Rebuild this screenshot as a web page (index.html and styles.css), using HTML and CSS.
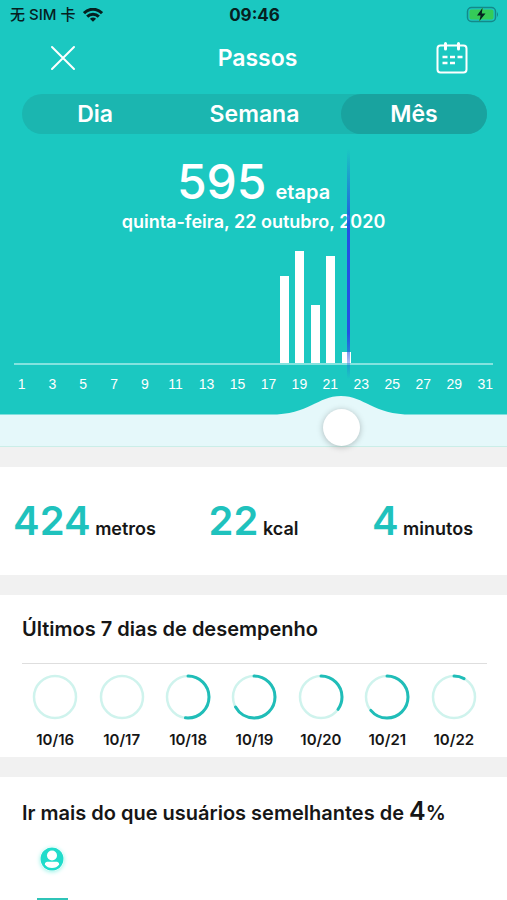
FILE: index.html
```html
<!DOCTYPE html>
<html lang="pt-br">
<head>
  <meta charset="UTF-8">
  <meta name="viewport" content="width=device-width, initial-scale=1">
  <title>Passos</title>
  <link rel="stylesheet" href="styles.css">
</head>
<body>
  <div class="topo">
    <!-- Barra de status -->
    <div class="status">
      <div class="operadora">
        <span>无 SIM 卡</span>
        <svg width="20" height="14" viewBox="0 0 20 14" fill="none" stroke="#06201f" stroke-width="3">
          <path d="M1 5.2C6-.1 14-.1 19 5.2"/>
          <path d="M4.2 8.6C7.4 5.4 12.6 5.4 15.8 8.6"/>
          <path d="M10 13.8L6.9 10.8Q10 8.3 13.1 10.8Z" fill="#06201f" stroke="none"/>
        </svg>
      </div>
      <div class="hora">09:46</div>
      <div class="bateria">
        <svg width="34" height="18" viewBox="0 0 34 18">
          <rect x="2.5" y="1.5" width="28" height="14" rx="4" fill="none" stroke="#14898a" stroke-width="1.5"/>
          <rect x="4.5" y="3.5" width="24" height="10" rx="2" fill="#35cb58"/>
          <path d="M32 6Q34 8.5 32 11Z" fill="#14898a"/>
          <path d="M17.5 2L12 9.5H15.6L14.4 15L20.5 7.4H16.8Z" fill="#052420" stroke="#35cb58" stroke-width="1" paint-order="stroke"/>
        </svg>
      </div>
    </div>

    <header class="cabecalho">
      <button class="icone" type="button" aria-label="Fechar">
        <svg width="26" height="26" viewBox="0 0 26 26" stroke="#fff" stroke-width="2" stroke-linecap="round">
          <path d="M2 2L24 24M24 2L2 24"/>
        </svg>
      </button>
      <h1>Passos</h1>
      <button class="icone" type="button" aria-label="Calendário">
        <svg width="34" height="34" viewBox="0 0 34 34" fill="none" stroke="#fff" stroke-width="2.5">
          <rect x="2.5" y="4.5" width="29" height="27" rx="3" stroke-width="2"/>
          <path d="M10.5 2.5V8M23.5 2.5V8" stroke-width="3" stroke-linecap="round"/>
          <path d="M7.5 16H12.5M15 16H20M22.5 16H27.5M7.5 22H12.5M15 22H20"/>
        </svg>
      </button>
    </header>

    <nav class="abas">
      <button type="button">Dia</button>
      <button type="button">Semana</button>
      <button type="button" class="ativa">Mês</button>
    </nav>

    <div class="resumo">
      <p class="total"><strong>595</strong> etapa</p>
      <p class="data">quinta-feira, 22 outubro, 2020</p>
    </div>

    <!-- Gráfico do mês: uma coluna por dia -->
    <div class="grafico">
      <div class="barras" id="barras"></div>
      <div class="dias" id="dias"></div>
    </div>

    <div class="seletor">
      <svg class="onda" viewBox="0 0 507 52" preserveAspectRatio="none">
        <path d="M0 20H270C310 20 317 1 341 1C365 1 372 20 412 20H507V52H0Z" fill="#e5f8fa"/>
      </svg>
      <input type="range" min="1" max="31" value="22" aria-label="Dia do mês">
    </div>
  </div>

  <section class="numeros">
    <p><strong>424</strong> metros</p>
    <p><strong>22</strong> kcal</p>
    <p><strong>4</strong> minutos</p>
  </section>

  <section class="desempenho">
    <h2>Últimos 7 dias de desempenho</h2>
    <ul class="aneis" id="aneis"></ul>
  </section>

  <section class="comparacao">
    <h2>Ir mais do que usuários semelhantes de <strong>4</strong>%</h2>
    <div class="usuario">
      <svg width="24" height="24" viewBox="0 0 24 24">
        <circle cx="12" cy="12" r="11.5" fill="#20dccb"/>
        <circle cx="12" cy="8.5" r="5" fill="#fff"/>
        <path d="M4.8 17.5C5 13.8 8.5 14.8 12 14.8S19 13.8 19.2 17.5C17.5 20 15 21 12 21S6.500 20 4.8 17.5Z" fill="#fff"/>
      </svg>
      <div class="coluna"></div>
    </div>
  </section>

  <script>
    // Altura das barras em px, por dia do mês
    const passos = { 18: 87, 19: 112, 20: 58, 21: 107, 22: 11 };
    const barras = document.getElementById("barras");
    const dias = document.getElementById("dias");

    for (let dia = 1; dia <= 31; dia++) {
      const coluna = document.createElement("div");
      if (passos[dia]) {
        coluna.innerHTML = `<div class="barra" style="height: ${passos[dia]}px"></div>`;
      }
      if (dia === 22) {
        coluna.innerHTML += `<div class="marcador"></div>`;
      }
      barras.appendChild(coluna);

      const rotulo = document.createElement("span");
      rotulo.textContent = dia % 2 ? dia : "";
      dias.appendChild(rotulo);
    }

    // Percentual da meta em cada dia
    const ultimos = [
      ["10/16", 0], ["10/17", 0], ["10/18", 52], ["10/19", 67],
      ["10/20", 35], ["10/21", 64], ["10/22", 8]
    ];

    document.getElementById("aneis").innerHTML = ultimos.map(([data, valor]) => `
      <li>
        <svg width="46" height="46" viewBox="0 0 46 46" fill="none">
          <circle cx="23" cy="23" r="21" stroke="#cff3ed" stroke-width="2.5"/>
          ${valor ? `<circle cx="23" cy="23" r="21" stroke="#20bdb8" stroke-width="3" stroke-linecap="round" pathLength="100" stroke-dasharray="${valor} 100" transform="rotate(-90 23 23)"/>` : ""}
        </svg>
        <span>${data}</span>
      </li>
    `).join("");
  </script>
</body>
</html>
```
FILE: styles.css
```css
* {
  box-sizing: border-box;
}

body {
  font-family: Inter, "Noto Sans CJK SC", sans-serif;
  font-weight: 600;
  margin: 0;
  background: #f1f1f1;
  color: #161616;
}

h1, h2, p, ul {
  margin: 0;
  padding: 0;
}

button {
  font: inherit;
  color: inherit;
  background: none;
  border: none;
  padding: 0;
  cursor: pointer;
}

svg {
  display: block;
}

.topo {
  background: #1bc8c1;
  color: #fff;
}

/* barra de status */
.status {
  display: grid;
  grid-template-columns: 1fr auto 1fr;
  align-items: center;
  height: 30px;
  padding: 0 8px 0 10px;
  color: #06201f;
}

.operadora {
  display: flex;
  align-items: center;
  gap: 8px;
  font-size: 15px;
  font-weight: 500;
  line-height: 20px;
}

.hora {
  font-size: 17px;
  font-weight: 700;
}

.bateria {
  justify-self: end;
}

/* cabeçalho */
.cabecalho {
  display: flex;
  justify-content: space-between;
  align-items: center;
  height: 56px;
  padding: 0 38px 0 46px;
}

.cabecalho h1 {
  font-size: 23px;
  font-weight: 600;
}

.icone {
  display: flex;
  justify-content: center;
  width: 34px;
}

.abas {
  display: grid;
  grid-template-columns: 11fr 13fr 11fr;
  height: 40px;
  margin: 8px 20px 0 22px;
  border-radius: 20px;
  background: #1bb6b0;
}

.abas button {
  font-size: 23px;
  border-radius: 20px;
}

.abas .ativa {
  background: #19a39f;
}

.resumo {
  padding-top: 24px;
  text-align: center;
}

.total {
  font-size: 20px;
  line-height: 20px;
}

.total strong {
  font-size: 48px;
  font-weight: 500;
  line-height: 48px;
  margin-right: 4px;
}

.data {
  font-size: 18px;
  line-height: 32px;
}

/* gráfico */
.grafico {
  padding: 0 14px;
}

.barras,
.dias {
  display: grid;
  grid-template-columns: repeat(31, 1fr);
}

.barras {
  height: 127px;
  border-bottom: 2px solid #84e3df;
}

.barras > div {
  display: flex;
  justify-content: center;
  align-items: flex-end;
  position: relative;
}

.barra {
  width: 9px;
  background: #fff;
}

.marcador {
  position: absolute;
  left: 9px;
  bottom: -16px;
  width: 3px;
  height: 230px;
  background: linear-gradient(to bottom, rgba(35, 80, 228, 0), #2350e4 35%, #2350e4 80%, rgba(35, 80, 228, 0));
}

.dias {
  height: 30px;
  padding-top: 11px;
  font-family: "Liberation Sans", Arial, sans-serif;
  font-size: 14px;
  font-weight: 400;
  line-height: 16px;
}

.dias span {
  display: flex;
  justify-content: center;
}

/* seletor do dia */
.seletor {
  position: relative;
  height: 52px;
  padding: 14px 14px 0;
  border-bottom: 1px solid #cbeee8;
}

.onda {
  position: absolute;
  top: 0;
  left: 0;
  width: 100%;
  height: 100%;
}

.seletor input {
  -webkit-appearance: none;
  appearance: none;
  position: relative;
  display: block;
  width: 100%;
  height: 37px;
  margin: 0;
  background: none;
}

.seletor input::-webkit-slider-thumb {
  -webkit-appearance: none;
  width: 37px;
  height: 37px;
  border-radius: 50%;
  background: #fff;
  box-shadow: 0 1px 6px rgba(0, 0, 0, 0.25);
}

/* números do dia */
.numeros {
  display: grid;
  grid-template-columns: repeat(3, 1fr);
  margin-top: 20px;
  padding: 30px 0;
  background: #fff;
  text-align: center;
  font-size: 18px;
  line-height: 20px;
}

.numeros strong {
  font-size: 40px;
  font-weight: 600;
  line-height: 48px;
  color: #1fc2bd;
}

h2 {
  font-size: 20px;
  font-weight: 600;
  line-height: 28px;
}

.desempenho {
  margin-top: 20px;
  padding: 20px 20px 7px 22px;
  background: #fff;
}

.aneis {
  display: grid;
  grid-template-columns: repeat(7, 1fr);
  margin-top: 20px;
  padding-top: 10px;
  border-top: 1px solid #dedede;
  list-style: none;
}

.aneis li {
  display: flex;
  flex-direction: column;
  align-items: center;
  gap: 10px;
  font-size: 15px;
  line-height: 20px;
}

.comparacao {
  margin-top: 20px;
  padding: 20px 20px 0 22px;
  background: #fff;
}

.comparacao strong {
  font-size: 25px;
  font-weight: 600;
}

.usuario {
  display: flex;
  flex-direction: column;
  align-items: center;
  gap: 27px;
  width: 60px;
  padding-top: 20px;
}

.usuario svg {
  border-radius: 50%;
  box-shadow: 0 1px 4px #9af3e8;
}

.coluna {
  width: 31px;
  height: 2px;
  background: #2fc4b8;
}
```
